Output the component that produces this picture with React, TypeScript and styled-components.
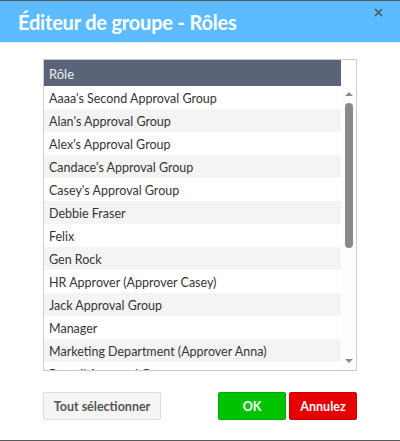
import styled, { createGlobalStyle } from "styled-components";

const GlobalStyle = createGlobalStyle`
  html, body {
    margin: 0;
    padding: 0;
    background: #ffffff;
  }
  * {
    box-sizing: border-box;
  }
`;

const roles = [
  "Aaaa's Second Approval Group",
  "Alan's Approval Group",
  "Alex's Approval Group",
  "Candace's Approval Group",
  "Casey's Approval Group",
  "Debbie Fraser",
  "Felix",
  "Gen Rock",
  "HR Approver (Approver Casey)",
  "Jack Approval Group",
  "Manager",
  "Marketing Department (Approver Anna)",
  "Payroll Approval Group",
];

const Dialog = styled.div`
  width: 400px;
  height: 441px;
  display: flex;
  flex-direction: column;
  border-top: 1px solid #5a5a5a;
  border-bottom: 1px solid #5a5a5a;
  font-family: "Lato", "Open Sans", sans-serif;
  background: #ffffff;
`;

const Header = styled.div`
  height: 42px;
  background: #5cbcff;
  position: relative;
  display: flex;
  align-items: center;
  padding-left: 18px;
  border-bottom: 1px solid #e6f3ff;
`;

const Title = styled.h1`
  margin: 0;
  font-size: 20px;
  font-weight: 700;
  color: #ffffff;
  letter-spacing: -0.2px;
`;

const Close = styled.button`
  position: absolute;
  top: 5px;
  right: 16px;
  border: none;
  background: transparent;
  padding: 0;
  width: 12px;
  height: 12px;
  display: flex;
  align-items: center;
  justify-content: center;
  cursor: pointer;
`;

const Body = styled.div`
  flex: 1;
  padding: 16px 43px 0 43px;
  display: flex;
  flex-direction: column;
`;

const ListBox = styled.div`
  height: 312px;
  border: 1px solid #c9ccd0;
  display: flex;
  flex-direction: column;
`;

const HeadRow = styled.div`
  display: flex;
  height: 26px;
`;

const HeadCell = styled.div`
  flex: 1;
  background: #5a6478;
  color: #eef0f3;
  font-size: 13px;
  display: flex;
  align-items: center;
  padding: 1px 0 0 5px;
`;

const HeadGap = styled.div`
  width: 15px;
`;

const ListBody = styled.div`
  flex: 1;
  display: flex;
  min-height: 0;
`;

const Rows = styled.div`
  flex: 1;
  overflow: hidden;
`;

const Row = styled.div<{ $striped: boolean }>`
  height: 23px;
  display: flex;
  align-items: center;
  padding: 2px 0 0 5px;
  font-size: 12.5px;
  color: #353535;
  white-space: nowrap;
  background: ${(p) => (p.$striped ? "#f4f4f4" : "#ffffff")};
`;

const Track = styled.div`
  width: 15px;
  display: flex;
  flex-direction: column;
  align-items: center;
  padding: 6px 0 7px 0;
  background: #fdfdfd;
`;

const Arrow = styled.div<{ $down?: boolean }>`
  width: 0;
  height: 0;
  border-left: 4px solid transparent;
  border-right: 4px solid transparent;
  ${(p) =>
    p.$down
      ? "border-top: 4px solid #8c8c8c; margin-top: auto;"
      : "border-bottom: 4px solid #8c8c8c;"}
`;

const Thumb = styled.div`
  width: 8px;
  height: 145px;
  margin-top: 7px;
  border-radius: 4px;
  background: #8a8a8a;
`;

const Footer = styled.div`
  display: flex;
  align-items: center;
  margin-top: 21px;
  gap: 3px;
`;

const Button = styled.button<{ $tone: "plain" | "ok" | "cancel" }>`
  height: 28px;
  font-family: "Lato", "Open Sans", sans-serif;
  font-weight: 700;
  font-size: 12.5px;
  border-radius: 2px;
  cursor: pointer;
  padding: 0;
  width: ${(p) => (p.$tone === "plain" ? "118px" : "68px")};
  color: ${(p) => (p.$tone === "plain" ? "#555555" : "#ffffff")};
  background: ${(p) =>
    p.$tone === "plain" ? "#f5f5f5" : p.$tone === "ok" ? "#00c300" : "#e60000"};
  border: 1px solid
    ${(p) =>
      p.$tone === "plain" ? "#dddddd" : p.$tone === "ok" ? "#00a800" : "#c80000"};
  margin-right: ${(p) => (p.$tone === "plain" ? "auto" : "0")};
`;

export default function App() {
  return (
    <>
      <GlobalStyle />
      <Dialog>
        <Header>
          <Title>Éditeur de groupe - Rôles</Title>
          <Close aria-label="Fermer">
            <svg width="9" height="9" viewBox="0 0 9 9">
              <path d="M1 1 L8 8 M8 1 L1 8" stroke="#4a5560" strokeWidth="1.6" />
            </svg>
          </Close>
        </Header>
        <Body>
          <ListBox>
            <HeadRow>
              <HeadCell>Rôle</HeadCell>
              <HeadGap />
            </HeadRow>
            <ListBody>
              <Rows>
                {roles.map((r, i) => (
                  <Row key={r} $striped={i % 2 === 1}>
                    {r}
                  </Row>
                ))}
              </Rows>
              <Track>
                <Arrow />
                <Thumb />
                <Arrow $down />
              </Track>
            </ListBody>
          </ListBox>
          <Footer>
            <Button $tone="plain">Tout sélectionner</Button>
            <Button $tone="ok">OK</Button>
            <Button $tone="cancel">Annulez</Button>
          </Footer>
        </Body>
      </Dialog>
    </>
  );
}
